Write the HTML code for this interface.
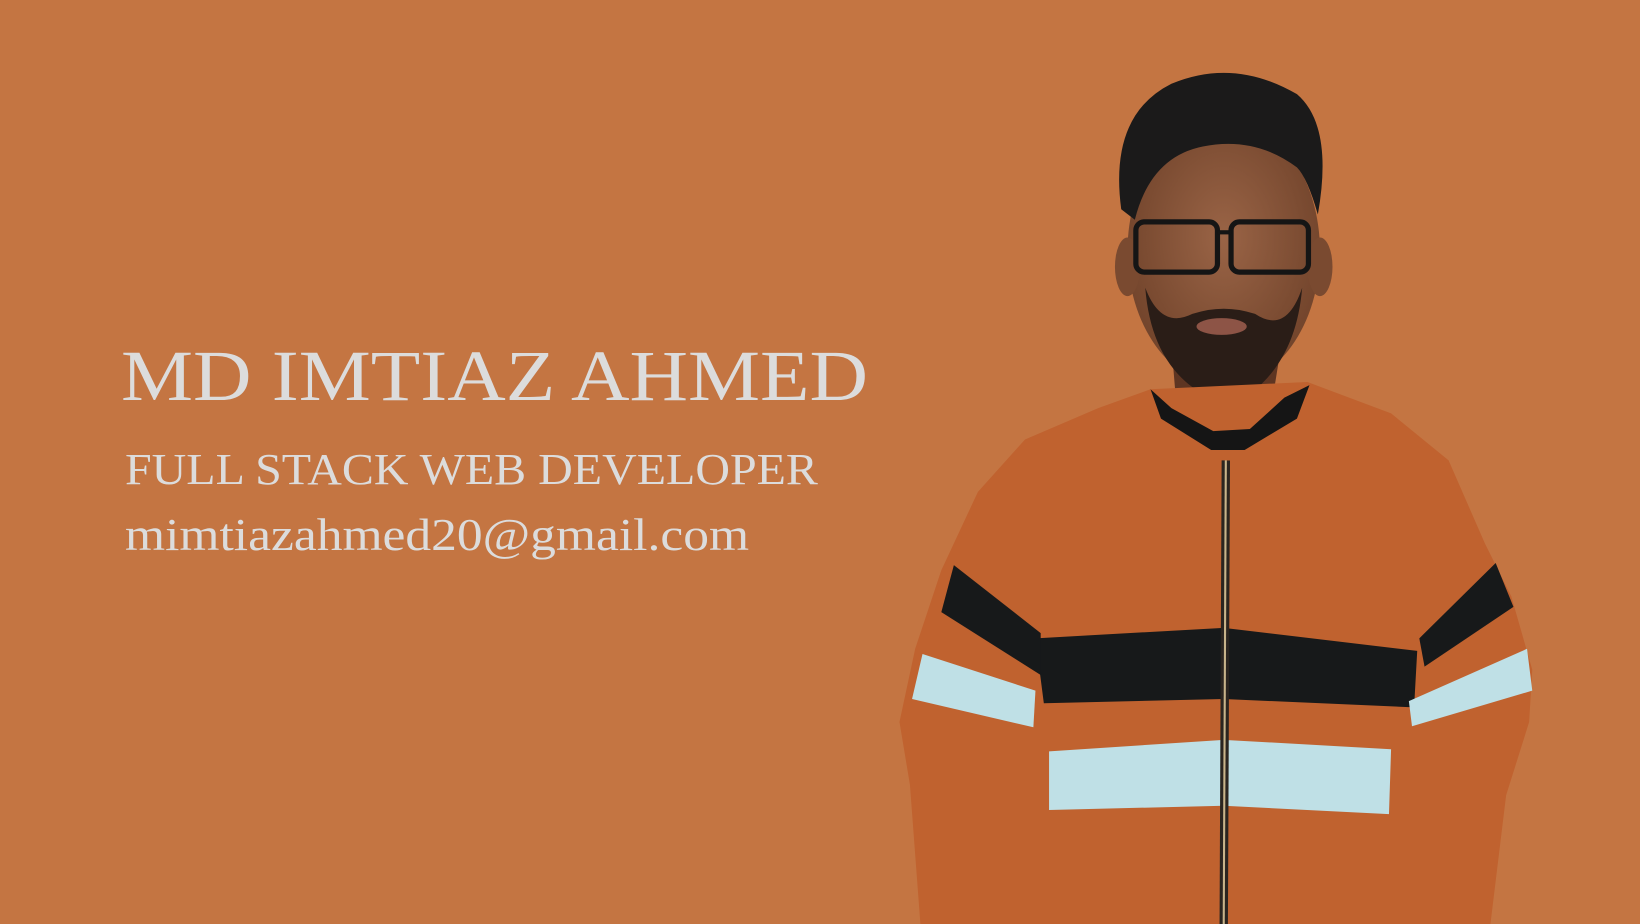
<!DOCTYPE html>
<html><head><meta charset="utf-8"><style>
html,body{margin:0;padding:0}
body{width:1640px;height:924px;background:#C47542;position:relative;overflow:hidden;font-family:"Liberation Serif",serif;color:#DCDCDC}
.t{position:absolute;white-space:nowrap;transform-origin:0 0}
</style></head><body>
<div class="t" style="left:121px;top:335px;font-size:72px;transform:scaleX(1.125)">MD IMTIAZ AHMED</div>
<div class="t" style="left:125px;top:444px;font-size:44px;transform:scaleX(1.09)">FULL STACK WEB DEVELOPER</div>
<div class="t" style="left:125px;top:508px;font-size:46px;transform:scaleX(1.12)">mimtiazahmed20@gmail.com</div>
<svg style="position:absolute;left:0;top:0" width="1640" height="924" viewBox="0 0 1568 883" preserveAspectRatio="none">
<defs><radialGradient id="sk" cx="50%" cy="45%" r="60%"><stop offset="0" stop-color="#9a6446"/><stop offset="1" stop-color="#6e4129"/></radialGradient></defs>
<path d="M1120 330 L1125 390 L1215 392 L1225 330Z" fill="#5e3522"/>
<ellipse cx="1170" cy="240" rx="92" ry="128" fill="url(#sk)"/>
<ellipse cx="1078" cy="255" rx="12" ry="28" fill="#7a4a30"/>
<ellipse cx="1262" cy="255" rx="12" ry="28" fill="#7a4a30"/>
<path d="M1095 275 Q1100 340 1140 370 Q1170 385 1205 368 Q1240 335 1245 275 Q1230 320 1200 300 Q1170 290 1140 300 Q1110 315 1095 275Z" fill="#2a1d17"/>
<ellipse cx="1168" cy="312" rx="24" ry="8" fill="#8d5446"/>
<path d="M1072 200 Q1060 110 1120 80 Q1180 55 1240 90 Q1275 120 1260 205 Q1250 170 1240 160 Q1200 130 1150 140 Q1100 150 1085 210Z" fill="#1b1a1a"/>
<rect x="1086" y="212" width="78" height="48" rx="8" fill="none" stroke="#151515" stroke-width="5"/>
<rect x="1177" y="212" width="74" height="48" rx="8" fill="none" stroke="#151515" stroke-width="5"/>
<path d="M1164 222 L1177 222" stroke="#151515" stroke-width="4"/>
<path d="M1100 372 L1050 390 L980 420 L935 470 L900 545 L875 620 L860 690 L870 750 L880 883 L1425 883 L1440 760 L1462 690 L1465 640 L1445 570 L1420 520 L1385 440 L1330 395 L1250 365 Z" fill="#C0622F"/>
<path d="M990 610 L1170 600 L1355 622 L1352 676 L1170 668 L998 672Z" fill="#17191a"/>
<path d="M912 540 L995 605 L995 645 L900 585Z" fill="#17191a"/>
<path d="M1430 538 L1447 580 L1362 637 L1357 610Z" fill="#17191a"/>
<path d="M1003 718 L1170 707 L1330 716 L1328 778 L1170 770 L1003 774Z" fill="#BFE0E6"/>
<path d="M882 625 L990 660 L988 695 L872 668Z" fill="#BFE0E6"/>
<path d="M1460 620 L1465 660 L1350 694 L1347 670Z" fill="#BFE0E6"/>
<path d="M1100 372 L1110 400 L1158 430 L1190 430 L1240 400 L1252 368 L1228 380 L1195 410 L1160 412 L1120 390Z" fill="#151515"/>
<path d="M1172 440 L1170 883" stroke="#2b2520" stroke-width="8"/>
<path d="M1172 440 L1170 883" stroke="#c9b48a" stroke-width="2"/>
</svg>
</body></html>
